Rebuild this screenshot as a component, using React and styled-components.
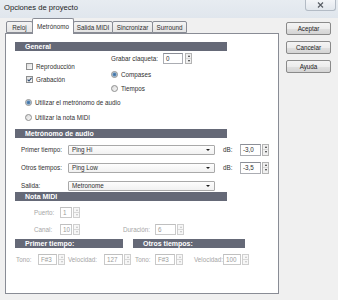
import React from 'react'
import styled, { createGlobalStyle } from 'styled-components'

const GlobalStyle = createGlobalStyle`
  html, body {
    margin: 0;
    padding: 0;
    background: #f0f0f0;
  }
  body {
    font-family: "Liberation Sans", Arial, sans-serif;
  }
`

const App = () => {
  return (
    <>
      <GlobalStyle />
      <Window>
        <TitleBar>
          <Title>Opciones de proyecto</Title>
          <CloseButton>
            <svg width="7" height="6" viewBox="0 0 7 6">
              <path d="M1 0.5 L6 5.5 M6 0.5 L1 5.5" stroke="#5a5f66" strokeWidth="1.2" />
            </svg>
          </CloseButton>
        </TitleBar>

        <Client>
          <TabColumn>
            <TabStrip>
              <Tab $w={27}>Reloj</Tab>
              <Tab $w={42} $active>Metrónomo</Tab>
              <Tab $w={40}>Salida MIDI</Tab>
              <Tab $w={41}>Sincronizar</Tab>
              <Tab $w={35}>Surround</Tab>
            </TabStrip>

            <Panel>
              {/* General */}
              <SectionHeader $w={212}>General</SectionHeader>
              <GeneralGrid>
                <CheckColumn>
                  <OptionRow>
                    <CheckBox />
                    Reproducción
                  </OptionRow>
                  <OptionRow>
                    <CheckBox $checked>
                      <svg width="5" height="5" viewBox="0 0 5 5">
                        <path d="M0.6 2.6 L2 4 L4.5 0.8" stroke="#2d4b73" strokeWidth="1.1" fill="none" />
                      </svg>
                    </CheckBox>
                    Grabación
                  </OptionRow>
                </CheckColumn>
                <ClaquetaColumn>
                  <FieldRow>
                    <FieldLabel $w={52}>Grabar claqueta:</FieldLabel>
                    <TextBox $w={20}>0</TextBox>
                    <Spinner $ml={2} />
                  </FieldRow>
                  <RadioStack>
                    <OptionRow>
                      <Radio $on />
                      Compases
                    </OptionRow>
                    <OptionRow>
                      <Radio />
                      Tiempos
                    </OptionRow>
                  </RadioStack>
                </ClaquetaColumn>
              </GeneralGrid>
              <AudioChoice>
                <OptionRow>
                  <Radio $on />
                  Utilizar el metrónomo de audio
                </OptionRow>
                <OptionRow>
                  <Radio />
                  Utilizar la nota MIDI
                </OptionRow>
              </AudioChoice>

              {/* Metrónomo de audio */}
              <SectionHeader $w={212} $mt={7}>Metrónomo de audio</SectionHeader>
              <AudioRows>
                <FieldRow>
                  <FieldLabel $w={47}>Primer tiempo:</FieldLabel>
                  <Combo>Ping Hi</Combo>
                  <FieldLabel $w={17} $ml={8}>dB:</FieldLabel>
                  <TextBox $w={21} $h={12}>-3,0</TextBox>
                  <Spinner $ml={1} $h={12} />
                </FieldRow>
                <FieldRow>
                  <FieldLabel $w={47}>Otros tiempos:</FieldLabel>
                  <Combo>Ping Low</Combo>
                  <FieldLabel $w={17} $ml={8}>dB:</FieldLabel>
                  <TextBox $w={21} $h={12}>-3,5</TextBox>
                  <Spinner $ml={1} $h={12} />
                </FieldRow>
                <FieldRow>
                  <FieldLabel $w={47}>Salida:</FieldLabel>
                  <Combo>Metronome</Combo>
                </FieldRow>
              </AudioRows>

              {/* Nota MIDI */}
              <SectionHeader $w={212} $mt={1}>Nota MIDI</SectionHeader>
              <MidiRows>
                <FieldRow>
                  <FieldLabel $w={26} $off>Puerto:</FieldLabel>
                  <TextBox $w={12} $off>1</TextBox>
                  <Spinner $ml={1} $off />
                </FieldRow>
                <FieldRow>
                  <FieldLabel $w={26} $off>Canal:</FieldLabel>
                  <TextBox $w={12} $off>10</TextBox>
                  <Spinner $ml={1} $off />
                  <FieldLabel $w={32} $ml={43} $off>Duración:</FieldLabel>
                  <TextBox $w={21} $off>6</TextBox>
                  <Spinner $ml={1} $off />
                </FieldRow>
              </MidiRows>

              <HeaderPair>
                <SectionHeader $w={108}>Primer tiempo:</SectionHeader>
                <SectionHeader $w={112} $ml={10}>Otros tiempos:</SectionHeader>
              </HeaderPair>
              <ToneRow>
                <FieldLabel $w={22} $ml={1} $off>Tono:</FieldLabel>
                <TextBox $w={19} $off>F#3</TextBox>
                <Spinner $ml={1} $off />
                <FieldLabel $w={36} $ml={3} $off>Velocidad:</FieldLabel>
                <TextBox $w={19} $off>127</TextBox>
                <Spinner $ml={1} $off />
                <FieldLabel $w={20} $ml={4} $off>Tono:</FieldLabel>
                <TextBox $w={20} $off>F#3</TextBox>
                <Spinner $ml={1} $off />
                <FieldLabel $w={29} $ml={11} $off>Velocidad:</FieldLabel>
                <TextBox $w={18} $off>100</TextBox>
                <Spinner $ml={1} $off />
              </ToneRow>
            </Panel>
          </TabColumn>

          <ButtonColumn>
            <DialogButton>Aceptar</DialogButton>
            <DialogButton>Cancelar</DialogButton>
            <DialogButton>Ayuda</DialogButton>
          </ButtonColumn>
        </Client>
      </Window>
    </>
  )
}

export default App

const Window = styled.div`
  width: 338px;
  height: 300px;
  overflow: hidden;
  display: flex;
  flex-direction: column;
  background: #f0f0f0;
  font-size: 6.3px;
  color: #303030;
`

const TitleBar = styled.div`
  height: 18px;
  flex: none;
  display: flex;
  align-items: flex-start;
  background: linear-gradient(#e7ecf1, #e0e6ed);
`

const Title = styled.div`
  font-size: 7.6px;
  color: #1c1c1c;
  padding: 3px 0 0 4px;
`

const CloseButton = styled.div`
  margin-left: auto;
  margin-right: 2px;
  width: 31px;
  height: 11px;
  box-sizing: border-box;
  border: 1px solid #b3bbc5;
  border-top: none;
  border-radius: 0 0 3px 3px;
  background: linear-gradient(#f3f5f8, #e2e7ed);
  display: flex;
  align-items: center;
  justify-content: center;

  svg {
    display: block;
  }
`

const Client = styled.div`
  flex: 1;
  display: flex;
  padding: 0 0 6px 5px;
  min-height: 0;
`

const TabColumn = styled.div`
  width: 274px;
  display: flex;
  flex-direction: column;
`

const TabStrip = styled.div`
  height: 15px;
  flex: none;
  display: flex;
  align-items: flex-end;
  padding-left: 2px;
`

const Tab = styled.div`
  width: ${p => p.$w}px;
  height: ${p => (p.$active ? 16 : 12)}px;
  margin-left: -1px;
  margin-bottom: ${p => (p.$active ? -1 : 0)}px;
  box-sizing: border-box;
  border: 1px solid #898c95;
  border-bottom: ${p => (p.$active ? 'none' : '1px solid #898c95')};
  border-radius: 2px 2px 0 0;
  background: ${p => (p.$active ? '#fff' : 'linear-gradient(#f4f4f4, #e4e4e4)')};
  position: relative;
  z-index: ${p => (p.$active ? 1 : 0)};
  display: flex;
  align-items: ${p => (p.$active ? 'flex-start' : 'center')};
  padding-top: ${p => (p.$active ? 4 : 0)}px;
  justify-content: center;
  white-space: nowrap;
`

const Panel = styled.div`
  flex: 1;
  box-sizing: border-box;
  border: 1px solid #898c95;
  background: #fff;
  padding: 8px 0 0 9px;
  display: flex;
  flex-direction: column;
`

const SectionHeader = styled.div`
  width: ${p => p.$w}px;
  height: 9px;
  flex: none;
  margin-top: ${p => p.$mt || 0}px;
  margin-left: ${p => p.$ml || 0}px;
  box-sizing: border-box;
  padding-left: 10px;
  background: #656977;
  color: #fff;
  font-weight: bold;
  font-size: 7px;
  line-height: 9px;
  white-space: nowrap;
`

const GeneralGrid = styled.div`
  display: grid;
  grid-template-columns: 85px auto;
  padding-left: 11px;
`

const CheckColumn = styled.div`
  display: flex;
  flex-direction: column;
  gap: 3px;
  padding-top: 10px;
`

const ClaquetaColumn = styled.div`
  display: flex;
  flex-direction: column;
  padding-top: 2px;
`

const RadioStack = styled.div`
  display: flex;
  flex-direction: column;
  gap: 4px;
  margin-top: 5px;
`

const AudioChoice = styled.div`
  display: flex;
  flex-direction: column;
  gap: 5px;
  margin-top: 4px;
  padding-left: 10px;
`

const OptionRow = styled.div`
  height: 10px;
  display: flex;
  align-items: center;
  gap: 3px;
  white-space: nowrap;
`

const CheckBox = styled.span`
  width: 7px;
  height: 7px;
  box-sizing: border-box;
  border: 1px solid #8e8f8f;
  background: linear-gradient(135deg, #dcdcdc, #fbfbfb);
  display: flex;
  align-items: center;
  justify-content: center;

  svg {
    display: block;
  }
`

const Radio = styled.span`
  width: 7px;
  height: 7px;
  box-sizing: border-box;
  border-radius: 50%;
  border: 1px solid #8e8f8f;
  background: ${p =>
    p.$on
      ? 'radial-gradient(circle at 50% 50%, #3e6f9f 0, #5c8cba 1.6px, #e8ecf0 2.6px)'
      : 'linear-gradient(135deg, #d8d8d8, #f8f8f8)'};
`

const FieldRow = styled.div`
  height: 11px;
  display: flex;
  align-items: center;
`

const FieldLabel = styled.span`
  width: ${p => p.$w}px;
  margin-left: ${p => p.$ml || 0}px;
  flex: none;
  white-space: nowrap;
  color: ${p => (p.$off ? '#a6a6a6' : '#303030')};
`

const TextBox = styled.span`
  width: ${p => p.$w}px;
  height: ${p => p.$h || 11}px;
  flex: none;
  box-sizing: border-box;
  border: 1px solid ${p => (p.$off ? '#c9c9c9' : '#abadb3')};
  border-top-color: ${p => (p.$off ? '#bfbfbf' : '#8b8e96')};
  background: #fff;
  padding-left: 2px;
  display: flex;
  align-items: center;
  color: ${p => (p.$off ? '#9c9c9c' : '#303030')};
`

const SpinBox = styled.span`
  width: 7px;
  height: ${p => p.$h || 11}px;
  margin-left: ${p => p.$ml || 0}px;
  flex: none;
  box-sizing: border-box;
  border: 1px solid ${p => (p.$off ? '#cfcfcf' : '#b4b4b4')};
  background: ${p => (p.$off ? '#f7f7f7' : '#f0f0f0')};
  display: flex;
  flex-direction: column;
`

const SpinHalf = styled.span`
  flex: 1;
  display: flex;
  align-items: center;
  justify-content: center;

  & + & {
    border-top: 1px solid ${p => (p.$off ? '#d8d8d8' : '#c4c4c4')};
  }
`

const Arrow = styled.span`
  width: 0;
  height: 0;
  border-left: 1.5px solid transparent;
  border-right: 1.5px solid transparent;
  ${p =>
    p.$up
      ? `border-bottom: 2px solid ${p.$off ? '#c2c2c2' : '#303030'};`
      : `border-top: 2px solid ${p.$off ? '#c2c2c2' : '#303030'};`}
`

const Spinner = ({ $ml, $h, $off }) => (
  <SpinBox $ml={$ml} $h={$h} $off={$off}>
    <SpinHalf $off={$off}>
      <Arrow $up $off={$off} />
    </SpinHalf>
    <SpinHalf $off={$off}>
      <Arrow $off={$off} />
    </SpinHalf>
  </SpinBox>
)

const AudioRows = styled.div`
  display: flex;
  flex-direction: column;
  gap: 7px;
  margin-top: 6px;
  padding-left: 6px;
`

const ComboBox = styled.span`
  width: 147px;
  height: 10px;
  flex: none;
  box-sizing: border-box;
  border: 1px solid #a9a9a9;
  border-radius: 1px;
  background: linear-gradient(#fdfdfd, #f1f1f1);
  padding: 0 4px 0 3px;
  display: flex;
  align-items: center;
  justify-content: space-between;
`

const ComboArrow = styled.span`
  width: 0;
  height: 0;
  border-left: 2px solid transparent;
  border-right: 2px solid transparent;
  border-top: 2px solid #1e1e1e;
`

const Combo = ({ children }) => (
  <ComboBox>
    {children}
    <ComboArrow />
  </ComboBox>
)

const MidiRows = styled.div`
  display: flex;
  flex-direction: column;
  gap: 6px;
  margin-top: 6px;
  padding-left: 19px;
`

const HeaderPair = styled.div`
  display: flex;
  margin-top: 4px;
`

const ToneRow = styled.div`
  height: 11px;
  display: flex;
  align-items: center;
  margin-top: 6px;
`

const ButtonColumn = styled.div`
  width: 45px;
  margin-left: 7px;
  padding-top: 4px;
  display: flex;
  flex-direction: column;
  gap: 6px;
`

const DialogButton = styled.div`
  height: 13px;
  box-sizing: border-box;
  border: 1px solid #8a8a8a;
  border-radius: 2px;
  background: linear-gradient(#f4f4f4 0%, #ececec 50%, #e0e0e0 51%, #d4d4d4 100%);
  display: flex;
  align-items: center;
  justify-content: center;
  color: #222;
`
